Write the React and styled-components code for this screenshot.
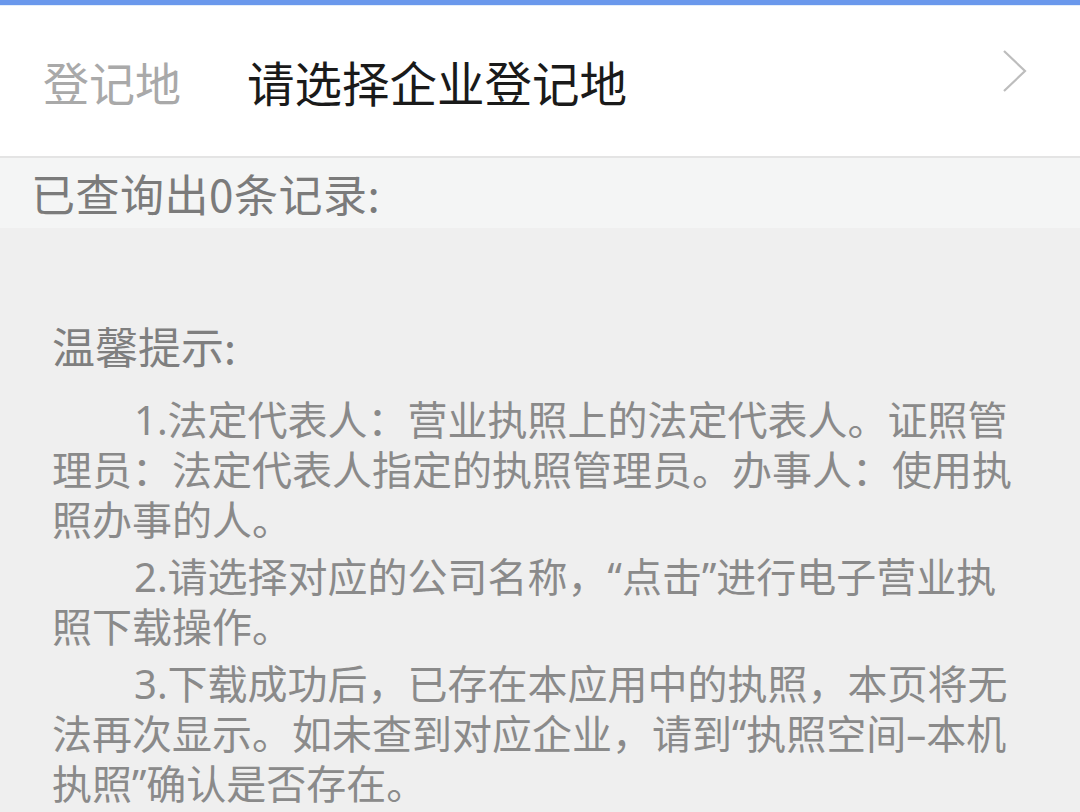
import styled, { createGlobalStyle } from "styled-components";

const GlobalStyle = createGlobalStyle`
  html, body {
    margin: 0;
    padding: 0;
    background: #efefef;
  }
  body {
    font-family: "Noto Sans CJK SC", "Noto Sans", sans-serif;
  }
`;

const Page = styled.div`
  width: 1080px;
  height: 812px;
  overflow: hidden;
  background: #efefef;
  display: flex;
  flex-direction: column;

  & > * {
    flex-shrink: 0;
  }
`;

const TopBar = styled.div`
  height: 5px;
  background: #6a98ec;
  border-bottom: 1px solid #e3eefb;
`;

const SelectRow = styled.div`
  height: 152px;
  background: #ffffff;
  border-bottom: 2px solid #e4e4e4;
  display: flex;
  align-items: center;
  padding: 0 52px 0 43px;
  box-sizing: border-box;
`;

const Label = styled.span`
  font-size: 46px;
  color: #a9a9a9;
  width: 204px;
  flex-shrink: 0;
`;

const Value = styled.span`
  font-size: 47.5px;
  color: #1a1a1a;
  flex: 1;
`;

const Chevron = styled.svg`
  width: 26px;
  height: 44px;
  margin-top: -20px;
`;

const CountBar = styled.div`
  height: 70px;
  background: #f4f5f5;
  display: flex;
  align-items: center;
  padding-left: 31px;
  font-size: 44px;
  color: #7b7b7b;
  letter-spacing: 0.5px;
`;

const Tips = styled.div`
  padding: 87px 50px 0 52px;
  color: #8a8a8a;
`;

const TipsTitle = styled.div`
  font-size: 43px;
  color: #7f7f7f;
  line-height: 60px;
  margin-bottom: 20px;
`;

/* Latin glyphs (digits, curly quotes, dash) come from Noto Sans so the quotes stay narrow */
const Para = styled.p`
  margin: 0 0 7px;
  font-family: "Noto Sans", "Noto Sans CJK SC", sans-serif;
  font-size: 40px;
  line-height: 50px;
  text-indent: 82px;
`;

const tips = [
  "1.法定代表人：营业执照上的法定代表人。证照管理员：法定代表人指定的执照管理员。办事人：使用执照办事的人。",
  "2.请选择对应的公司名称，“点击”进行电子营业执照下载操作。",
  "3.下载成功后，已存在本应用中的执照，本页将无法再次显示。如未查到对应企业，请到“执照空间–本机执照”确认是否存在。",
];

export default function App() {
  return (
    <>
      <GlobalStyle />
      <Page>
        <TopBar />
        <SelectRow>
          <Label>登记地</Label>
          <Value>请选择企业登记地</Value>
          <Chevron viewBox="0 0 26 44">
            <polyline points="2,2 23,22 2,42" fill="none" stroke="#bdbdbd" strokeWidth="2.2" />
          </Chevron>
        </SelectRow>
        <CountBar>已查询出0条记录:</CountBar>
        <Tips>
          <TipsTitle>温馨提示:</TipsTitle>
          {tips.map((t, i) => (
            <Para key={i}>{t}</Para>
          ))}
        </Tips>
      </Page>
    </>
  );
}
